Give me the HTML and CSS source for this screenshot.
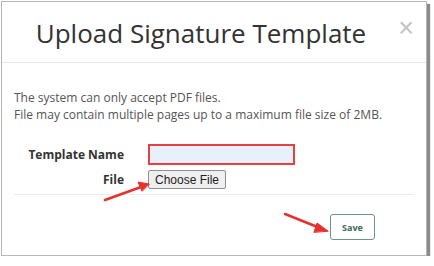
FILE: index.html
```html
<!DOCTYPE html>
<html lang="en">
<head>
    <meta charset="UTF-8">
    <title>Upload Signature Template</title>
    <link rel="stylesheet" href="styles.css">
</head>
<body>
    <div class="modal">
        <div class="modal-header">
            <h1>Upload Signature Template</h1>
            <span class="close">&times;</span>
        </div>
        <div class="modal-body">
            <p>The system can only accept PDF files.<br>File may contain multiple pages up to a maximum file size of 2MB.</p>
            <div class="form-row">
                <label>Template Name</label>
                <input type="text" class="name-input">
            </div>
            <div class="form-row">
                <label>File</label>
                <button class="file-btn">Choose File</button>
            </div>
        </div>
        <div class="modal-footer">
            <button class="save-btn">Save</button>
        </div>

        <!-- annotation arrows -->
        <svg class="arrows" width="434" height="266" viewBox="0 0 434 266">
            <g stroke="#e8302c" stroke-width="2.5" stroke-linecap="round" fill="#e8302c">
                <line x1="105" y1="200" x2="141" y2="187"/>
                <polygon points="149,184 138,182 142,191" stroke-width="1"/>
                <line x1="285" y1="214" x2="320" y2="228"/>
                <polygon points="328,231 317,223 314,232" stroke-width="1"/>
            </g>
        </svg>
    </div>
</body>
</html>
```

FILE: styles.css
```css
body {
    margin: 0;
    background: #fff;
    font-family: "Open Sans", Arial, sans-serif;
    color: #555;
}
.modal {
    position: relative;
    margin: 1px 0 0 1px;
    width: 424px;
    height: 253px;
    border: 1px solid #b5b5b5;
    box-shadow: 3px 3px 1px #8a8a8a;
    background: #fff;
}
.modal-header {
    position: relative;
    height: 60px;
    border-bottom: 1px solid #e5e5e5;
    text-align: center;
}
.modal-header h1 {
    margin: 0;
    padding-top: 13px;
    padding-right: 26px;
    font-size: 26px;
    font-weight: 400;
    line-height: 36px;
    color: #333;
}
.close {
    position: absolute;
    right: 12px;
    top: 12px;
    font-size: 27px;
    line-height: 28px;
    color: #c4c4c4;
    font-family: Arial, sans-serif;
}
.modal-body {
    padding: 26px 12px 0;
}
.modal-body p {
    margin: 0 0 21px;
    font-size: 12px;
    line-height: 17px;
}
.form-row {
    display: flex;
    align-items: center;
    margin-bottom: 5px;
}
.form-row label {
    width: 110px;
    text-align: right;
    font-weight: 700;
    font-size: 12px;
    color: #333;
    margin-right: 24px;
}
.name-input {
    box-sizing: border-box;
    width: 147px;
    height: 21px;
    margin: 0;
    border: 2px solid #e8403f;
    background: #e8f0fe;
}
.file-btn {
    margin: 0;
    height: 19px;
    padding: 0 6px;
    font-family: Arial, sans-serif;
    font-size: 12px;
    color: #222;
    background: #efefef;
    border: 1px solid #8f8f8f;
    border-radius: 2px;
}
.modal-footer {
    margin: 3px 12px 0;
    border-top: 1px solid #ececec;
    display: flex;
    justify-content: flex-end;
    padding: 19px 39px 0 0;
}
.save-btn {
    width: 45px;
    height: 26px;
    font-family: "Open Sans", Arial, sans-serif;
    font-size: 9px;
    font-weight: 700;
    color: #3e6656;
    background: #fff;
    border: 1px solid #6a9586;
    border-radius: 3px;
}
.arrows {
    position: absolute;
    left: -2px;
    top: -2px;
    pointer-events: none;
}
```
